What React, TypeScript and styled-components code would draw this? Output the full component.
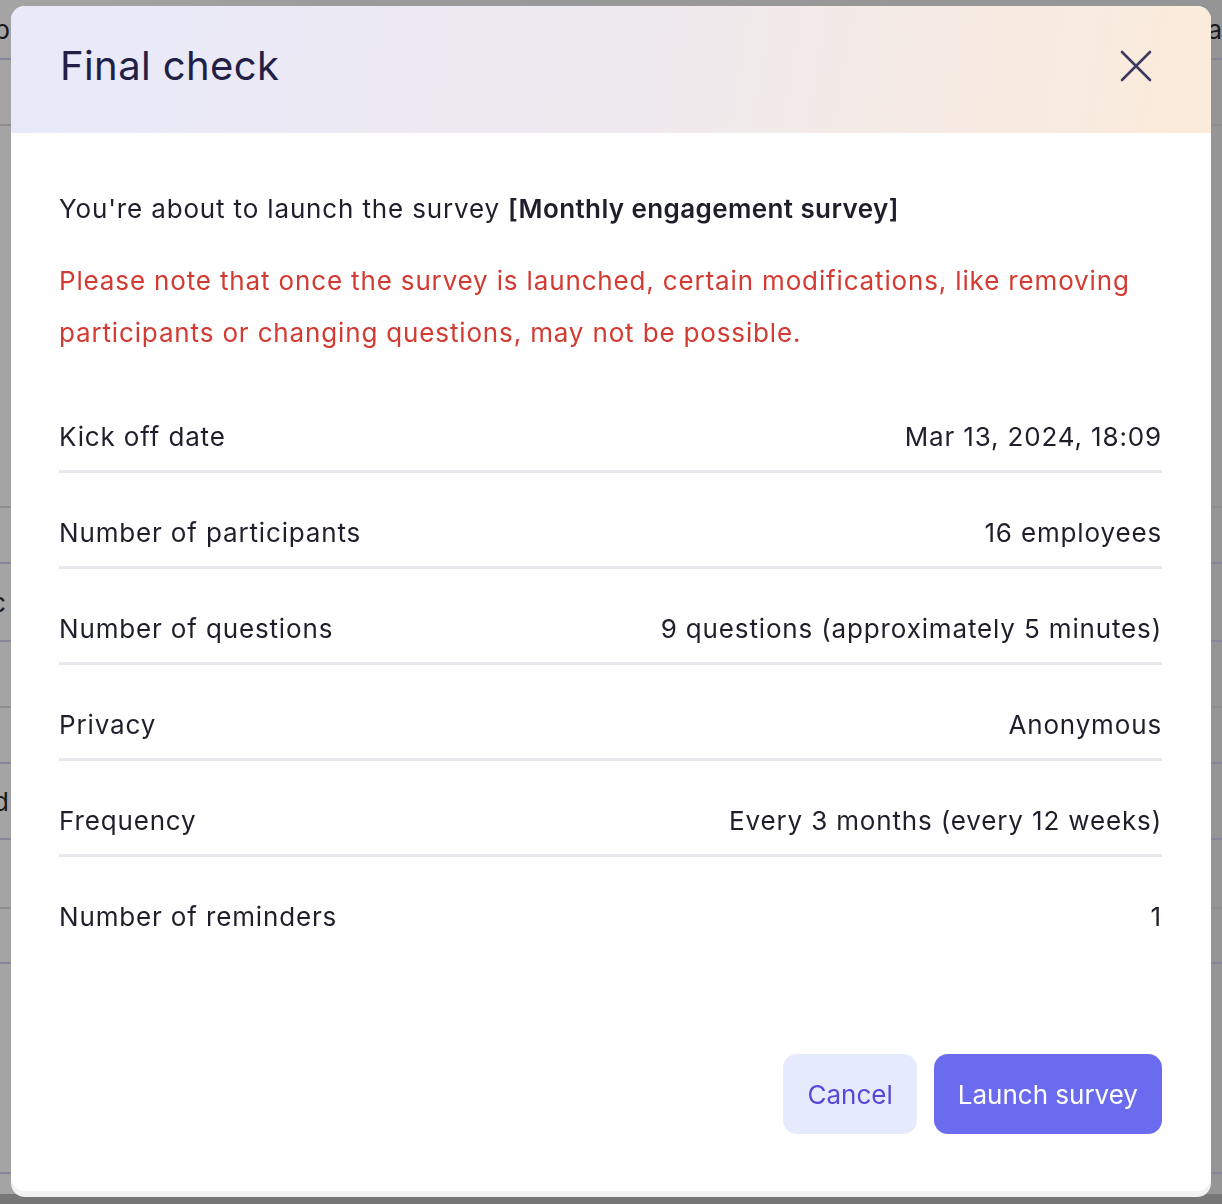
import React from "react";
import styled, { createGlobalStyle } from "styled-components";

const GlobalStyle = createGlobalStyle`
  html, body {
    margin: 0;
    padding: 0;
    background: #9a9a9a;
  }
  body {
    font-family: "Inter", "Liberation Sans", sans-serif;
    -webkit-font-smoothing: antialiased;
  }
`;

type Detail = {
  label: string;
  value: string;
};

const details: Detail[] = [
  { label: "Kick off date", value: "Mar 13, 2024, 18:09" },
  { label: "Number of participants", value: "16 employees" },
  { label: "Number of questions", value: "9 questions (approximately 5 minutes)" },
  { label: "Privacy", value: "Anonymous" },
  { label: "Frequency", value: "Every 3 months (every 12 weeks)" },
  { label: "Number of reminders", value: "1" },
];

// page behind the dialog, mostly hidden by it
const Page = styled.div`
  width: 1222px;
  height: 1204px;
  overflow: hidden;
  background: linear-gradient(90deg, #a4a4a4 0%, #999 40%, #959595 100%);
  display: flex;
  flex-direction: column;
`;

const PageRow = styled.div<{ $h: number; $line?: "dark" | "light" }>`
  height: ${(p) => p.$h}px;
  flex-shrink: 0;
  border-bottom: 2px solid
    ${(p) =>
      p.$line === "dark" ? "#86859a" : p.$line === "light" ? "#8f8f8f" : "transparent"};
  display: flex;
  align-items: center;
  justify-content: space-between;
  font-size: 26px;
  color: #1a1a1a;
`;

const Fragment = styled.span<{ $shift: number }>`
  margin-left: ${(p) => p.$shift}px;
`;

const PageFooter = styled.div`
  flex: 1;
  background: #777;
`;

const Overlay = styled.div`
  position: fixed;
  inset: 0;
  display: flex;
  justify-content: center;
  align-items: flex-start;
  padding-top: 6px;
`;

const Dialog = styled.div`
  width: 1200px;
  background: #fff;
  border-radius: 14px;
  box-shadow: 0 6px 0 #f2f2f3;
  overflow: hidden;
  display: flex;
  flex-direction: column;
`;

const Header = styled.div`
  height: 127px;
  box-sizing: border-box;
  padding: 0 58px 8px 49px;
  display: flex;
  align-items: center;
  justify-content: space-between;
  background: linear-gradient(100deg, #e8e9f9 0%, #efeaf0 50%, #fbebda 100%);
`;

const Title = styled.h2`
  margin: 0;
  font-size: 40px;
  font-weight: 400;
  letter-spacing: 0.4px;
  color: #221f47;
`;

const CloseButton = styled.button`
  width: 34px;
  height: 34px;
  padding: 0;
  border: none;
  background: transparent;
  display: flex;
  align-items: center;
  justify-content: center;
  cursor: pointer;
`;

const Body = styled.div`
  padding: 50px 49px 57px 48px;
  display: flex;
  flex-direction: column;
  letter-spacing: 0.85px;
`;

const Intro = styled.p`
  margin: 0;
  font-size: 26px;
  line-height: 52px;
  color: #1f1f2b;

  strong {
    font-weight: 600;
    letter-spacing: 0.4px;
  }
`;

const Warning = styled.p`
  margin: 20px 0 0;
  font-size: 26px;
  line-height: 52px;
  color: #d33a32;
`;

const DetailList = styled.div`
  margin-top: 18px;
  display: flex;
  flex-direction: column;
`;

const DetailRow = styled.div<{ $last?: boolean }>`
  display: flex;
  justify-content: space-between;
  align-items: center;
  padding: 46px 0 19px;
  line-height: 28px;
  font-size: 26px;
  color: #1f1f2b;
  border-bottom: 3px solid ${(p) => (p.$last ? "transparent" : "#e6e7ea")};
`;

const Footer = styled.div`
  margin-top: 101px;
  display: flex;
  justify-content: flex-end;
  gap: 17px;
`;

const ActionButton = styled.button<{ $primary?: boolean }>`
  height: 80px;
  padding: 0 24px;
  border: none;
  border-radius: 14px;
  font-family: inherit;
  font-size: 26px;
  letter-spacing: 0;
  cursor: pointer;
  background: ${(p) => (p.$primary ? "#6b6bef" : "#e6eafd")};
  color: ${(p) => (p.$primary ? "#ffffff" : "#5549d9")};
`;

const CloseIcon = () => (
  <svg width="32" height="32" viewBox="0 0 32 32" fill="none">
    <path
      d="M2 2L30 30M30 2L2 30"
      stroke="#3c3a5e"
      strokeWidth="2.6"
      strokeLinecap="round"
    />
  </svg>
);

const App: React.FC = () => {
  return (
    <>
      <GlobalStyle />
      <Page>
        <PageRow $h={58} $line="dark">
          <Fragment $shift={-6}>p</Fragment>
          <Fragment $shift={0}>ea</Fragment>
        </PageRow>
        <PageRow $h={64} $line="light" />
        <PageRow $h={380} $line="light" />
        <PageRow $h={54} $line="dark" />
        <PageRow $h={76} $line="dark">
          <Fragment $shift={-9}>c</Fragment>
        </PageRow>
        <PageRow $h={64} $line="light" />
        <PageRow $h={54} $line="dark" />
        <PageRow $h={74} $line="dark">
          <Fragment $shift={-7}>d</Fragment>
        </PageRow>
        <PageRow $h={67} $line="light" />
        <PageRow $h={53} $line="dark" />
        <PageRow $h={208} $line="dark" />
        <PageRow $h={18} />
        <PageFooter />
      </Page>
      <Overlay>
        <Dialog role="dialog" aria-labelledby="final-check-title">
          <Header>
            <Title id="final-check-title">Final check</Title>
            <CloseButton aria-label="Close">
              <CloseIcon />
            </CloseButton>
          </Header>
          <Body>
            <Intro>
              You're about to launch the survey{" "}
              <strong>[Monthly engagement survey]</strong>
            </Intro>
            <Warning>
              Please note that once the survey is launched, certain
              modifications, like removing participants or changing questions,
              may not be possible.
            </Warning>
            <DetailList>
              {details.map((d, i) => (
                <DetailRow key={d.label} $last={i === details.length - 1}>
                  <span>{d.label}</span>
                  <span>{d.value}</span>
                </DetailRow>
              ))}
            </DetailList>
            <Footer>
              <ActionButton>Cancel</ActionButton>
              <ActionButton $primary>Launch survey</ActionButton>
            </Footer>
          </Body>
        </Dialog>
      </Overlay>
    </>
  );
};

export default App;
